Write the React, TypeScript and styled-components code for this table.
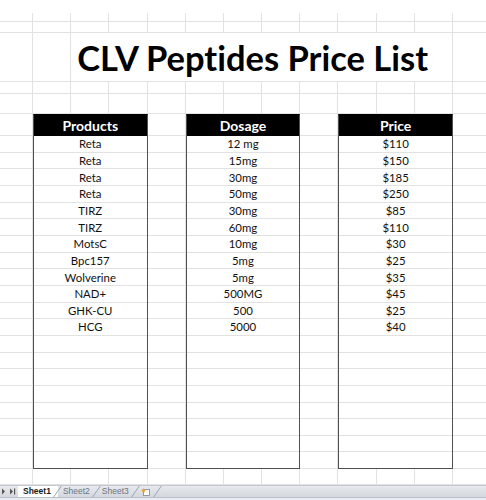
import React from 'react';
import styled, { createGlobalStyle } from 'styled-components';

const GlobalStyle = createGlobalStyle`
  html, body {
    margin: 0;
    padding: 0;
    background: #fff;
  }
  body {
    font-family: Lato, "Liberation Sans", sans-serif;
    font-variant-ligatures: none;
  }
`;

const DATA_ROWS = 20;
const ROW_HEIGHTS = [13, 9, 11, 49, 12, 20, 22, ...Array(DATA_ROWS).fill(16.66), 16];
const COL_COUNT = 13;

const products = ['Reta', 'Reta', 'Reta', 'Reta', 'TIRZ', 'TIRZ', 'MotsC', 'Bpc157', 'Wolverine', 'NAD+', 'GHK-CU', 'HCG'];
const dosages = ['12 mg', '15mg', '30mg', '50mg', '30mg', '60mg', '10mg', '5mg', '5mg', '500MG', '500', '5000'];
const prices = ['$110', '$150', '$185', '$250', '$85', '$110', '$30', '$25', '$35', '$45', '$25', '$40'];

const tables = [
    { title: 'Products', col: '2 / 5', values: products },
    { title: 'Dosage', col: '6 / 9', values: dosages },
    { title: 'Price', col: '10 / 13', values: prices },
];

const Page = styled.div`
    width: 486px;
    height: 500px;
    display: flex;
    flex-direction: column;
    overflow: hidden;
`;

const Sheet = styled.div`
    flex: 0 0 auto;
    display: grid;
    grid-template-columns: 33px repeat(11, 38.18px) 1fr;
    grid-template-rows: ${ROW_HEIGHTS.map((h) => `${h}px`).join(' ')};
`;

const GridCell = styled.div<{ $r: number; $c: number }>`
    grid-row: ${(p) => p.$r};
    grid-column: ${(p) => p.$c};
    box-sizing: border-box;
    border-right: ${(p) => (p.$r === 1 || p.$c === COL_COUNT ? 'none' : '1px solid #e2e2e2')};
    border-bottom: ${(p) => (p.$r === 1 ? 'none' : '1px solid #e2e2e2')};
`;

const Title = styled.h1`
    grid-row: 4;
    grid-column: 3 / 13;
    margin: 0 1px 1px 0;
    padding: 0 0 6px 6px;
    display: flex;
    align-items: flex-end;
    background: #fff;
    color: #000;
    font: 700 34.5px/1 Lato, 'Liberation Sans', sans-serif;
    font-variant-ligatures: none;
    white-space: nowrap;
    z-index: 1;
`;

const Table = styled.div<{ $col: string }>`
    grid-column: ${(p) => p.$col};
    grid-row: 7 / ${8 + DATA_ROWS};
    display: grid;
    grid-template-rows: subgrid;
    border: 1px solid #505050;
    border-top-color: #000;
    background: #fff;
    z-index: 1;
`;

const Head = styled.div`
    display: flex;
    align-items: flex-end;
    justify-content: center;
    padding-bottom: 3.5px;
    background: #000;
    color: #fff;
    font: 700 14px/1 Lato, 'Liberation Sans', sans-serif;
`;

const Cell = styled.div<{ $last?: boolean }>`
    display: flex;
    align-items: flex-end;
    justify-content: center;
    padding-bottom: 2px;
    border-bottom: ${(p) => (p.$last ? 'none' : '1px solid #e2e2e2')};
    color: #111;
    font: 400 11.4px/1 Lato, 'Liberation Sans', sans-serif;
`;

const TabBar = styled.div`
    flex: 0 0 11px;
    display: flex;
    align-items: stretch;
    border-top: 1px solid #c3c8cf;
    background: linear-gradient(#e6e9ed, #d4d8de);
    font: 400 8.5px/1 'Liberation Sans', Arial, sans-serif;
`;

const Nav = styled.div`
    flex: 0 0 17px;
    display: flex;
    align-items: center;
    padding-left: 1px;
`;

const Tab = styled.div<{ $active?: boolean }>`
    position: relative;
    display: flex;
    align-items: center;
    padding: 0 7px 0 5px;
    background: ${(p) => (p.$active ? '#fff' : 'transparent')};
    color: ${(p) => (p.$active ? '#1a1a1a' : '#6d7480')};
    font-weight: ${(p) => (p.$active ? 700 : 400)};

    &::after {
        content: '';
        position: absolute;
        top: 0;
        bottom: 0;
        right: 0;
        border-right: 1px solid #9ba3ae;
        transform: skewX(-35deg);
    }
`;

const StatusStrip = styled.div`
    flex: 1;
    border-top: 1px solid #b9bfc8;
    background: #e9ecf0;
`;

function NavArrows() {
    return (
        <svg width="16" height="7" viewBox="0 0 16 7">
            <path d="M1 0.5 L4 3.5 L1 6.5 Z" fill="#555" />
            <path d="M9 0.5 L12 3.5 L9 6.5 Z" fill="#555" />
            <rect x="13" y="0.5" width="1.2" height="6" fill="#555" />
        </svg>
    );
}

function InsertSheetIcon() {
    return (
        <svg width="10" height="8" viewBox="0 0 10 8">
            <rect x="2.5" y="1.5" width="6" height="6" fill="#fff" stroke="#7a8594" strokeWidth="0.8" />
            <path d="M2.5 0 L3.2 1.6 L5 1.8 L3.6 2.9 L4 4.6 L2.5 3.7 L1 4.6 L1.4 2.9 L0 1.8 L1.8 1.6 Z" fill="#f0a030" />
        </svg>
    );
}

export default function App() {
    const cells: React.ReactNode[] = [];
    ROW_HEIGHTS.forEach((_, ri) => {
        for (let c = 1; c <= COL_COUNT; c++) {
            cells.push(<GridCell key={`${ri}-${c}`} $r={ri + 1} $c={c} />);
        }
    });

    return (
        <Page>
            <GlobalStyle />
            <Sheet>
                {cells}
                <Title>CLV Peptides Price List</Title>
                {tables.map((t) => (
                    <Table key={t.title} $col={t.col}>
                        <Head>{t.title}</Head>
                        {Array.from({ length: DATA_ROWS }, (_, i) => (
                            <Cell key={i} $last={i === DATA_ROWS - 1}>
                                {t.values[i] ?? ''}
                            </Cell>
                        ))}
                    </Table>
                ))}
            </Sheet>
            <TabBar>
                <Nav>
                    <NavArrows />
                </Nav>
                <Tab $active>Sheet1</Tab>
                <Tab>Sheet2</Tab>
                <Tab>Sheet3</Tab>
                <Tab>
                    <InsertSheetIcon />
                </Tab>
            </TabBar>
            <StatusStrip />
        </Page>
    );
}
